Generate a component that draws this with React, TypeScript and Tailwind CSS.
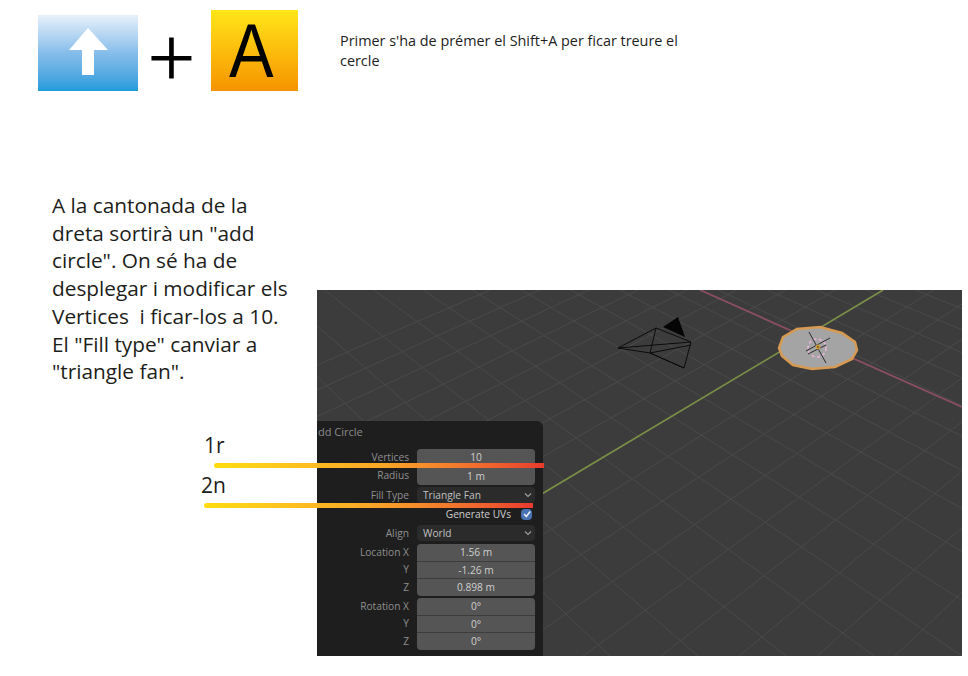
const greenVP = [1939, -339];
const redVP = [-260, -174];
const greenStops = Array.from({ length: 24 }, (_, i) => 583 + 78 * (i - 12));
const redStops = Array.from({ length: 26 }, (_, i) => 610 + 88 * (i - 8));

// ground grid in page coordinates, every line runs to a vanishing point
function GroundGrid() {
  return (
    <g stroke="#4a4a4a" strokeWidth="1">
      {greenStops.map((x) => (
        <line key={`g${x}`} x1={x} y1={656} x2={greenVP[0]} y2={greenVP[1]} />
      ))}
      {redStops.map((x) => (
        <line key={`r${x}`} x1={x} y1={656} x2={redVP[0]} y2={redVP[1]} />
      ))}
    </g>
  );
}

function Scene() {
  return (
    <svg viewBox="317 290 645 366" className="block h-full w-full">
      <GroundGrid />
      <line x1="700" y1="290" x2="962" y2="407" stroke="#8a4f60" strokeWidth="1.8" />
      <line x1="540" y1="495" x2="883" y2="290" stroke="#7b9145" strokeWidth="1.6" />
      {/* camera */}
      <polygon points="663,327 678,317 685,337" fill="#050505" />
      <g fill="none" stroke="#0c0c0c" strokeWidth="1">
        <polygon points="656,328 691,342 684,368 650,353" />
        <path d="M618 348 L656 328 M618 348 L691 342 M618 348 L650 353 L684 368 M650 353 L691 345" />
      </g>
      {/* circle */}
      <polygon
        points="779,348 783,337 797,329 820,327 842,333 855,342 857,350 852,359 835,367 812,369 793,365 782,356"
        fill="#a4a4a4"
        stroke="#d79a52"
        strokeWidth="2.5"
      />
      <circle cx="817" cy="348" r="9" fill="none" stroke="#eab2da" strokeWidth="1.6" strokeDasharray="3 2.5" />
      <g stroke="#2c2c2c" strokeWidth="1">
        <line x1="809" y1="332" x2="826" y2="363" />
        <line x1="806" y1="351" x2="830" y2="338" />
        <line x1="808" y1="354" x2="826" y2="345" />
      </g>
      <circle cx="818" cy="347" r="2" fill="#8f6a22" stroke="#e8b04a" strokeWidth="1" />
    </svg>
  );
}

function Label({ children }: { children: React.ReactNode }) {
  return <div className="pr-2 text-right text-[#8f8f8f]">{children}</div>;
}

function NumberGroup({ rows }: { rows: [string, string, string][] }) {
  return (
    <div className="grid grid-cols-[100px_118px] items-stretch">
      {rows.map(([label, value, height], i) => (
        <div key={label + i} className="contents">
          <div className={`flex items-center justify-end pr-2 text-[#8f8f8f] ${height}`}>{label}</div>
          <div
            className={`flex items-center justify-center bg-[#555555] text-[#cfcfcf] ${height} ${
              i === 0 ? 'rounded-t' : 'border-t border-[#3d3d3d]'
            } ${i === rows.length - 1 ? 'rounded-b' : ''}`}
          >
            {value}
          </div>
        </div>
      ))}
    </div>
  );
}

function SelectRow({ label, value }: { label: string; value: string }) {
  return (
    <div className="grid h-4 grid-cols-[100px_118px] items-center">
      <Label>{label}</Label>
      <div className="flex h-4 items-center justify-between rounded-sm bg-[#2b2b2b] pl-[6px] pr-[3px] text-[#c0c0c0]">
        <span>{value}</span>
        <svg viewBox="0 0 8 8" className="h-2 w-2" fill="none" stroke="#a0a0a0" strokeWidth="1.1">
          <path d="M1 2.5 L4 5.5 L7 2.5" />
        </svg>
      </div>
    </div>
  );
}

function AddCirclePanel() {
  return (
    <div className="absolute bottom-0 left-0 h-[235px] w-[226px] rounded-tr-md bg-[#1e1e1e] text-[10.2px] leading-none [font-family:'Open_Sans',sans-serif]">
      <div className="h-7 pt-[5px] text-[11px] leading-[11px] text-[#8a8a8a]">
        <span className="pl-px">dd Circle</span>
      </div>
      <div className="flex flex-col">
        <NumberGroup
          rows={[
            ['Vertices', '10', 'h-[17px]'],
            ['Radius', '1 m', 'h-[19px]'],
          ]}
        />
        <div className="mt-0.5">
          <SelectRow label="Fill Type" value="Triangle Fan" />
        </div>
        <div className="mt-[3px] flex h-4 items-center justify-end gap-[10px] pr-[11px] text-[#cfcfcf]">
          <span>Generate UVs</span>
          <span className="flex h-[11px] w-[11px] items-center justify-center rounded-sm bg-[#4772b3]">
            <svg viewBox="0 0 10 10" className="h-[10px] w-[10px]" fill="none" stroke="#e8eef7" strokeWidth="1.6">
              <path d="M2 5 L4.3 7.5 L8.2 2.5" />
            </svg>
          </span>
        </div>
        <div className="mt-[3px]">
          <SelectRow label="Align" value="World" />
        </div>
        <div className="mt-[3px]">
          <NumberGroup
            rows={[
              ['Location X', '1.56 m', 'h-[17px]'],
              ['Y', '-1.26 m', 'h-[17px]'],
              ['Z', '0.898 m', 'h-[18px]'],
            ]}
          />
        </div>
        <div className="mt-0.5">
          <NumberGroup
            rows={[
              ['Rotation X', '0°', 'h-[17px]'],
              ['Y', '0°', 'h-[17px]'],
              ['Z', '0°', 'h-[18px]'],
            ]}
          />
        </div>
      </div>
    </div>
  );
}

export default function App() {
  return (
    <div className="relative h-[676px] w-[968px] overflow-hidden bg-white text-[#1d1d1b] [font-family:'Open_Sans',sans-serif]">
      {/* Top row: key combo and note */}
      <header className="flex h-[100px] items-start pl-[38px]">
        <div className="mt-[15px] flex h-[76px] w-[100px] items-center justify-center bg-gradient-to-b from-[#e8f1fa] via-[#86bdea] to-[#1d9bdc]">
          <svg viewBox="0 0 100 76" className="h-[76px] w-[100px]" fill="#ffffff">
            <polygon points="50,13 70,35 56,35 56,60 44,60 44,35 31,35" />
          </svg>
        </div>
        <div className="w-[73px] pr-[6px] pt-[14px] text-center text-[84px] font-[350] leading-[84px] text-black [-webkit-text-stroke:1px_#000]">
          +
        </div>
        <div className="mt-[10px] flex h-[81px] w-[87px] items-center justify-center bg-gradient-to-b from-[#ffe619] to-[#f59300] pr-[7px] text-[76px] leading-none text-black [font-family:'Liberation_Sans',sans-serif]">
          <span className="scale-x-[0.88]">A</span>
        </div>
        <p className="ml-[42px] mt-[31px] text-[14.4px] leading-[20px]">
          Primer s'ha de prémer el Shift+A per ficar treure el
          <br />
          cercle
        </p>
      </header>

      {/* Explanation and Blender viewport */}
      <section className="mt-[92px] flex items-start">
        <p className="ml-[52px] w-[265px] text-[20.8px] leading-[27.7px]">
          A la cantonada de la
          <br />
          dreta sortirà un "add
          <br />
          circle". On sé ha de
          <br />
          desplegar i modificar els
          <br />
          Vertices&nbsp; i ficar-los a 10.
          <br />
          El "Fill type" canviar a
          <br />
          "triangle fan".
        </p>
        <div className="relative mt-[98px] h-[366px] w-[645px] bg-[#3c3c3c]">
          <Scene />
          <AddCirclePanel />
        </div>
      </section>

      {/* Annotations over the panel */}
      <span className="absolute left-[204px] top-[431px] text-[21px] leading-[28px]">1r</span>
      <div className="absolute left-[214px] top-[463px] h-[5px] w-[330px] rounded-l-full bg-gradient-to-r from-[#ffdc0f] via-[#f9a826] to-[#e8392e]" />
      <span className="absolute left-[201px] top-[471px] text-[21px] leading-[28px]">2n</span>
      <div className="absolute left-[204px] top-[503px] h-[5px] w-[329px] rounded-l-full bg-gradient-to-r from-[#ffdc0f] via-[#f9a826] to-[#e8392e]" />
    </div>
  );
}
